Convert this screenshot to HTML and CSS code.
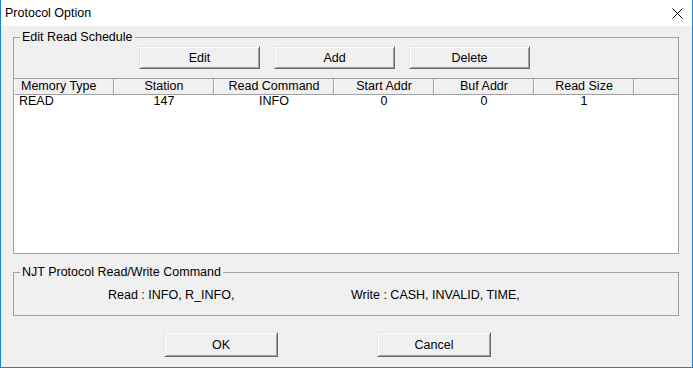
FILE: index.html
```html
<!DOCTYPE html>
<html lang="en">
<head>
    <meta charset="UTF-8">
    <title>Protocol Option</title>
    <link rel="stylesheet" href="styles.css">
</head>
<body>
    <div class="window">
        <header class="titlebar">
            <span class="title">Protocol Option</span>
            <svg class="close" width="11" height="11" viewBox="0 0 11 11">
                <path d="M0.5 0.5L10.5 10.5M10.5 0.5L0.5 10.5" stroke="#000" stroke-width="1" fill="none"/>
            </svg>
        </header>

        <div class="dialog">
            <fieldset class="group schedule">
                <legend>Edit Read Schedule</legend>
                <div class="toolbar">
                    <button class="btn btn-tool">Edit</button>
                    <button class="btn btn-tool">Add</button>
                    <button class="btn btn-tool">Delete</button>
                </div>
                <div class="listview">
                    <div class="lv-header">
                        <div class="lv-col left">Memory Type</div>
                        <div class="lv-col">Station</div>
                        <div class="lv-col">Read Command</div>
                        <div class="lv-col">Start Addr</div>
                        <div class="lv-col">Buf Addr</div>
                        <div class="lv-col">Read Size</div>
                        <div class="lv-col filler"></div>
                    </div>
                    <div class="lv-row">
                        <div class="lv-cell left">READ</div>
                        <div class="lv-cell">147</div>
                        <div class="lv-cell">INFO</div>
                        <div class="lv-cell">0</div>
                        <div class="lv-cell">0</div>
                        <div class="lv-cell">1</div>
                        <div class="lv-cell"></div>
                    </div>
                </div>
            </fieldset>

            <fieldset class="group command">
                <legend>NJT Protocol Read/Write Command</legend>
                <div class="commands">
                    <span class="cmd-read">Read : INFO, R_INFO,</span>
                    <span class="cmd-write">Write : CASH, INVALID, TIME,</span>
                </div>
            </fieldset>

            <div class="actions">
                <button class="btn btn-action">OK</button>
                <button class="btn btn-action">Cancel</button>
            </div>
        </div>
    </div>
</body>
</html>
```

FILE: styles.css
```css
* {
    margin: 0;
    padding: 0;
    box-sizing: border-box;
}

body {
    font-family: "Liberation Sans", Arial, sans-serif;
    font-size: 12.5px;
    color: #000;
    background-color: #fff;
}

.window {
    width: 693px;
    height: 368px;
    display: flex;
    flex-direction: column;
    background-color: #f0f0f0;
    border: 1px solid #1883d7;
    border-top: 0;
}

.titlebar {
    height: 26px;
    display: flex;
    align-items: center;
    justify-content: space-between;
    padding: 0 9px 0 4px;
    background-color: #fff;
}

.title {
    line-height: 14px;
}

.close {
    display: block;
}

.dialog {
    flex: 1;
    display: flex;
    flex-direction: column;
    padding: 0 13px 0 12px;
}

/* group boxes */
.group {
    border: 1px solid #a0a0a0;
    padding: 0;
    min-width: 0;
}

.group legend {
    margin-left: 6px;
    padding: 0 2px;
    line-height: 14px;
}

.schedule {
    margin-top: 4px;
    border-bottom: 0;
}

.toolbar {
    display: flex;
    gap: 14px;
    margin: 2px 0 9px 125px;
}

.btn {
    font-family: inherit;
    font-size: 12.5px;
    color: #000;
    background-color: #f0f0f0;
    border: 1px solid;
    border-color: #e3e3e3 #696969 #696969 #e3e3e3;
    box-shadow: inset 1px 1px #fff, inset -1px -1px #a0a0a0;
}

.btn-tool {
    width: 121px;
    height: 23px;
}

/* list view */
.listview {
    height: 176px;
    margin: 0 -1px;
    background-color: #fff;
    border: 1px solid #a0a0a0;
}

.lv-header,
.lv-row {
    display: grid;
    grid-template-columns: 100px 100px 120px 100px 100px 100px 1fr;
}

.lv-col {
    height: 16px;
    line-height: 15px;
    text-align: center;
    background-color: #f0f0f0;
    border-left: 1px solid #fff;
    border-right: 1px solid #a0a0a0;
    border-bottom: 1px solid #a0a0a0;
}

.lv-col.left {
    text-align: left;
    padding-left: 6px;
}

.lv-col.filler {
    border-right: 0;
}

.lv-cell {
    line-height: 13px;
    text-align: center;
}

.lv-cell.left {
    text-align: left;
    padding-left: 5px;
}

/* command group */
.command {
    margin-top: 11px;
}

.commands {
    display: flex;
    padding: 9px 0 13px 94px;
    line-height: 14px;
}

.cmd-read {
    width: 243px;
}

.actions {
    display: flex;
    gap: 99px;
    margin-top: 16px;
    padding-left: 151px;
}

.btn-action {
    width: 114px;
    height: 25px;
}
```
